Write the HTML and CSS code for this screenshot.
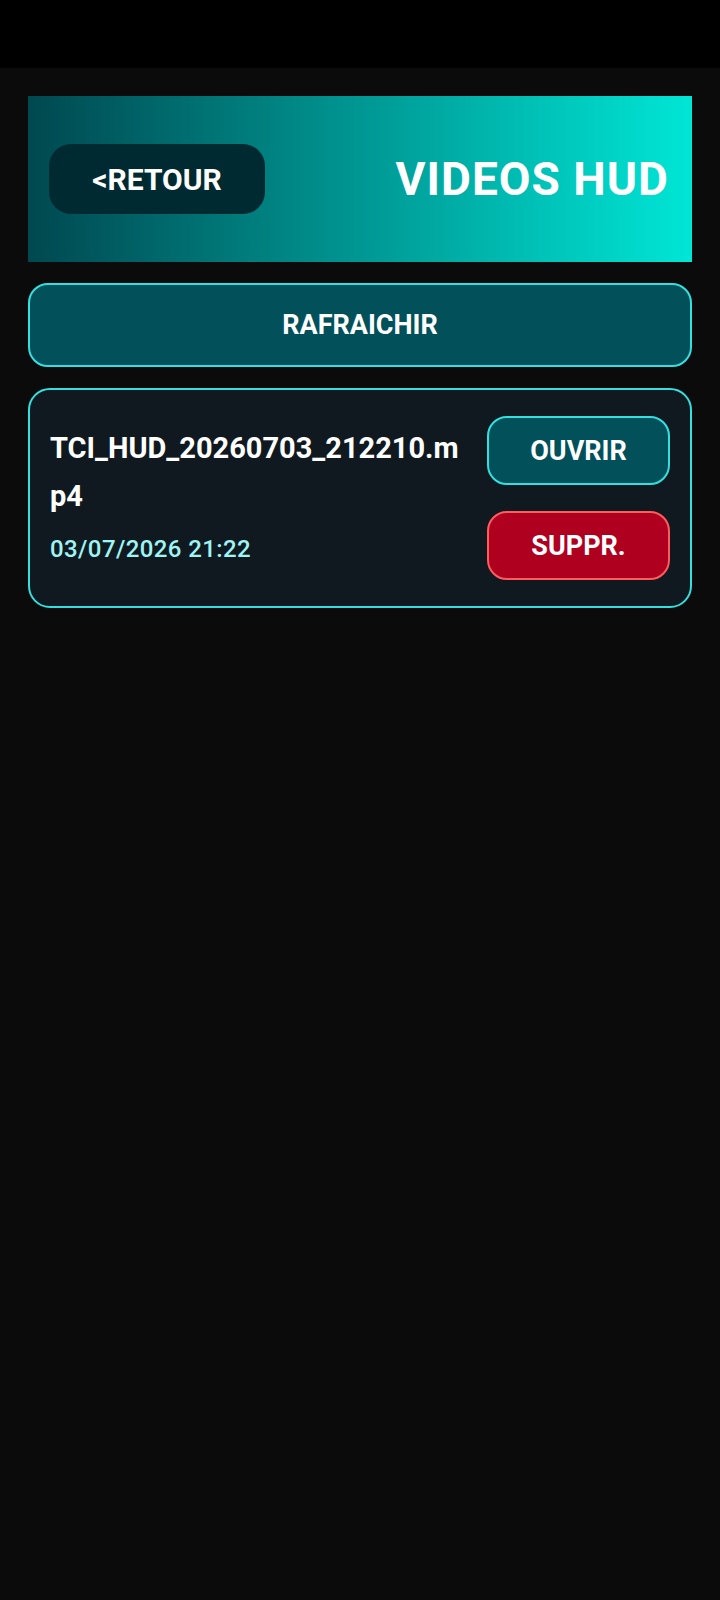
FILE: index.html
```html
<!DOCTYPE html>
<html lang="fr">
<head>
<meta charset="utf-8">
<meta name="viewport" content="width=720">
<title>Videos HUD</title>
<link rel="stylesheet" href="styles.css">
</head>
<body>
<div class="statusbar"></div>
<main class="content">
  <header class="header">
    <button class="btn-back">&lt;RETOUR</button>
    <h1 class="title">VIDEOS HUD</h1>
  </header>
  <button class="btn-refresh">RAFRAICHIR</button>
  <section class="card">
    <div class="info">
      <div class="name">TCI_HUD_20260703_212210.mp4</div>
      <div class="date">03/07/2026 21:22</div>
    </div>
    <div class="actions">
      <button class="btn btn-open">OUVRIR</button>
      <button class="btn btn-delete">SUPPR.</button>
    </div>
  </section>
</main>
</body>
</html>
```
FILE: styles.css
```css
* { box-sizing: border-box; }
html, body {
  margin: 0;
  padding: 0;
  background: #0b0b0b;
  font-family: Roboto, "Noto Sans", sans-serif;
  color: #ffffff;
}
body { min-height: 1600px; }
button { font-family: inherit; cursor: pointer; }

.statusbar {
  height: 68px;
  background: #000000;
}

.content {
  padding: 28px 28px 0 28px;
  display: flex;
  flex-direction: column;
  gap: 21px;
}

.header {
  height: 166px;
  display: flex;
  align-items: center;
  justify-content: space-between;
  padding: 0 23px 0 21px;
  background: linear-gradient(90deg, #004850 0%, #00e6d6 100%);
}

.btn-back {
  width: 216px;
  height: 70px;
  border: none;
  border-radius: 22px;
  background: #002a31;
  color: #ffffff;
  font-size: 30px;
  font-weight: 700;
  padding: 0;
}

.title {
  margin: 0;
  font-size: 46px;
  font-weight: 700;
  letter-spacing: 1px;
  color: #ffffff;
  line-height: 1;
}

.btn-refresh {
  height: 84px;
  width: 100%;
  border: 2px solid #34dfe0;
  border-radius: 20px;
  background: #01505a;
  color: #ffffff;
  font-size: 27px;
  font-weight: 700;
  padding: 0;
}

.card {
  display: flex;
  align-items: center;
  gap: 20px;
  padding: 26px 20px;
  background: #111920;
  border: 2px solid #34dfe0;
  border-radius: 22px;
}

.info {
  flex: 1;
  min-width: 0;
  margin-bottom: 9px;
}

.name {
  font-size: 29px;
  font-weight: 700;
  line-height: 48px;
  word-break: break-all;
}

.date {
  margin-top: 15px;
  font-size: 24px;
  font-weight: 500;
  letter-spacing: 0.4px;
  color: #9ff4f4;
}

.actions {
  display: flex;
  flex-direction: column;
  gap: 26px;
}

.btn {
  width: 183px;
  height: 69px;
  border-radius: 20px;
  color: #ffffff;
  font-size: 27px;
  font-weight: 700;
  padding: 0;
}

.btn-open {
  background: #01505a;
  border: 2px solid #34dfe0;
}

.btn-delete {
  background: #b00020;
  border: 2px solid #ff5c5c;
}
```
